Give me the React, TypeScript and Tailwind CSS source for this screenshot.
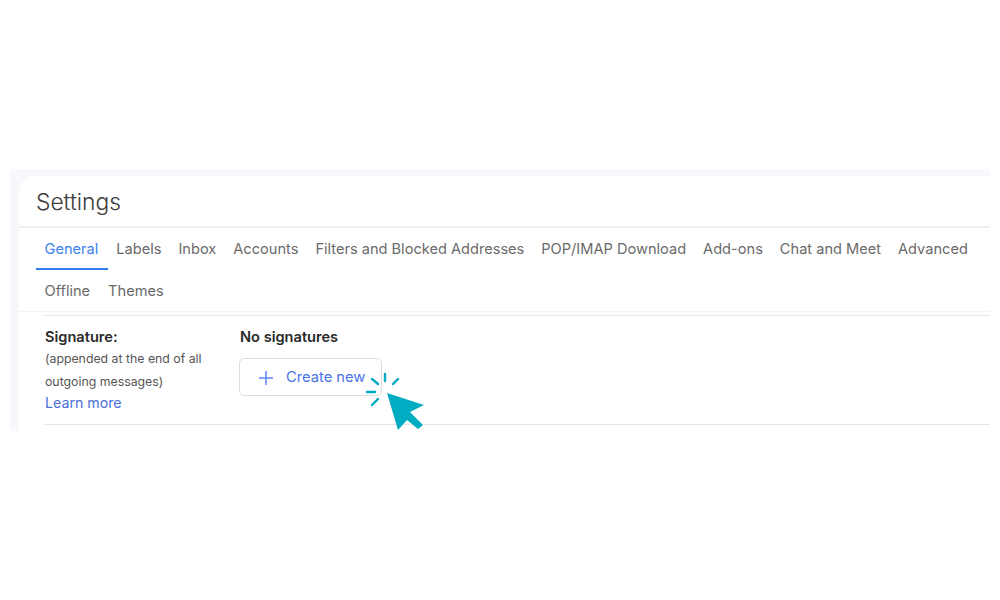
const tabsFirstRow = [
  "General",
  "Labels",
  "Inbox",
  "Accounts",
  "Filters and Blocked Addresses",
  "POP/IMAP Download",
  "Add-ons",
  "Chat and Meet",
  "Advanced",
];

function Tab({ label, active }: { label: string; active?: boolean }) {
  return (
    <div
      className={`flex h-[42px] items-center pl-[8.5px] text-[14.6px] whitespace-nowrap ${
        active ? "border-b-2 border-[#2f7df0] pt-[3px] pr-[9.5px] text-[#3b82ee]" : "pt-[1px] pr-[8.5px] text-[#6a6a6a]"
      }`}
    >
      {label}
    </div>
  );
}

function ClickCursor() {
  return (
    <svg className="absolute left-[365px] top-[372px]" width="62" height="60" viewBox="0 0 62 60" fill="none">
      <g stroke="#00acc1" strokeWidth="2.4" strokeLinecap="round">
        <line x1="20" y1="2" x2="20" y2="9" />
        <line x1="33" y1="7" x2="28" y2="12" />
        <line x1="7" y1="7" x2="13" y2="12" />
        <line x1="2" y1="20" x2="10" y2="20" />
        <line x1="7" y1="33" x2="13" y2="27" />
      </g>
      <path d="M22 21 L59 33 L45 40 L58 53 L53 57 L42 48 L33 58 Z" fill="#00acc1" />
    </svg>
  );
}

export default function App() {
  return (
    <div className="relative h-[600px] w-[1000px] overflow-hidden bg-white pt-[169px] pl-[10px] font-['Inter',sans-serif]">
      <div className="h-[262px] w-[980px] bg-[#f6f8fc] pt-[7px] pl-[9px]">
        <div className="h-[255px] rounded-tl-[16px] bg-white">
          <div className="flex h-[52px] items-center border-b-2 border-[#f0f0f0] pt-[2px] pl-[17px] text-[22.8px] font-light text-[#3c3c3c]">
            Settings
          </div>
          <div className="flex h-[42px] items-start pl-[17px]">
            {tabsFirstRow.map((t, i) => (
              <Tab key={t} label={t} active={i === 0} />
            ))}
          </div>
          <div className="flex h-[42px] items-start gap-[1px] border-b border-[#f3f3f3] pl-[17px]">
            <Tab label="Offline" />
            <Tab label="Themes" />
          </div>
          <div className="mt-[3px] ml-[25px] flex h-[110px] gap-[37px] border-y border-[#e6e6e6] pt-[11px]">
            <div className="w-[158px] pl-[1px]">
              <div className="text-[14.6px] leading-[20px] font-semibold text-[#2a2a2a]">Signature:</div>
              <div className="mt-[1px] text-[12.3px] leading-[22.5px] text-[#555555]">
                (appended at the end of all outgoing messages)
              </div>
              <div className="text-[14.2px] leading-[20px] text-[#4a6fd8]">Learn more</div>
            </div>
            <div>
              <div className="pl-[1px] text-[14.6px] leading-[20px] font-semibold text-[#2a2a2a]">No signatures</div>
              <button className="mt-[11px] flex h-[38px] w-[143px] items-center gap-[12px] rounded-[5px] border border-[#dddddd] pt-[1px] pl-[18px] text-[14.7px] text-[#4a73e8]">
                <svg width="16" height="16" viewBox="0 0 16 16" fill="none" stroke="#5b84ec" strokeWidth="1.5">
                  <path d="M8 1v14M1 8h14" />
                </svg>
                Create new
              </button>
            </div>
          </div>
        </div>
      </div>
      <ClickCursor />
    </div>
  );
}
